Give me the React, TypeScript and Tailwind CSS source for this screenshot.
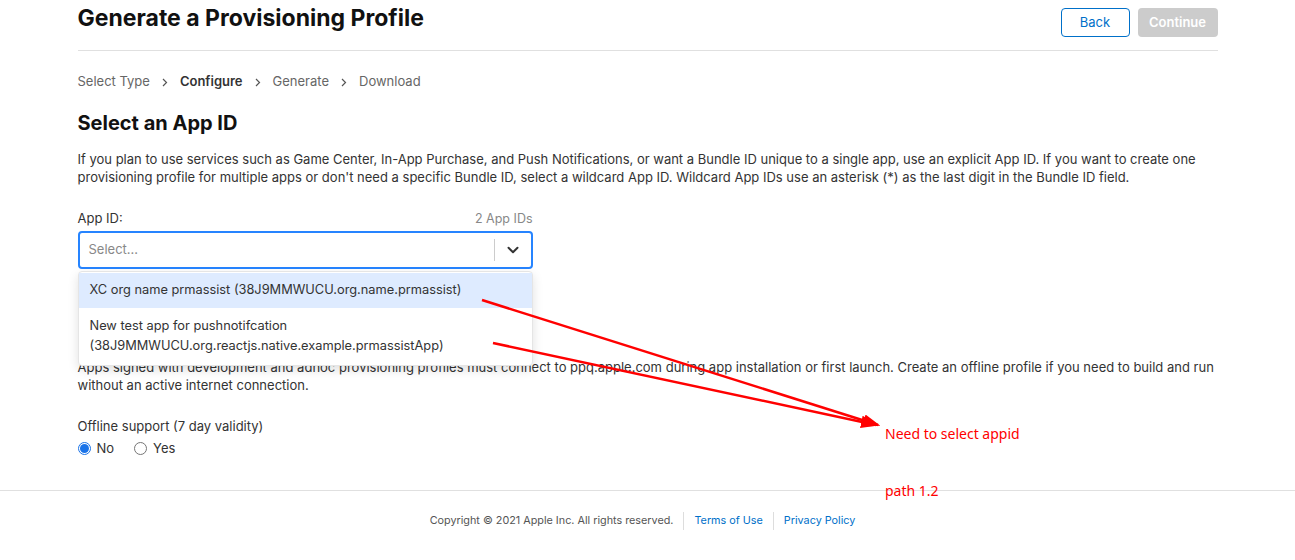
import { ChevronDown } from 'lucide-react'

const steps = ['Select Type', 'Configure', 'Generate', 'Download']

const appIds = [
  { name: 'XC org name prmassist', id: '38J9MMWUCU.org.name.prmassist', wrap: false },
  { name: 'New test app for pushnotifcation', id: '38J9MMWUCU.org.reactjs.native.example.prmassistApp', wrap: true },
]

function Crumb() {
  return (
    <svg width="6" height="9" viewBox="0 0 6 9" className="mx-[12px] mt-[3px]">
      <path d="M1 1l3.5 3.5L1 8" fill="none" stroke="#555" strokeWidth="1.2" />
    </svg>
  )
}

function Radio({ checked, label }: { checked: boolean; label: string }) {
  return (
    <label className="flex items-center gap-[6px] mr-[20px]">
      <span
        className={
          checked
            ? 'w-[13px] h-[13px] rounded-full border border-[#1a73e8] flex items-center justify-center'
            : 'w-[13px] h-[13px] rounded-full border border-[#767676]'
        }
      >
        {checked && <span className="w-[9px] h-[9px] rounded-full bg-[#1a73e8]" />}
      </span>
      <span className="text-[13px] leading-[18px] text-[#333]">{label}</span>
    </label>
  )
}

export default function App() {
  return (
    <div className="relative min-h-[560px] bg-white text-[#333] font-['Inter','Roboto',sans-serif]">
      <div className="max-w-[1140px] mx-auto">
        <div className="flex items-start justify-between h-[51px] border-b border-[#e0e0e0]">
          <h1 className="mt-[3px] text-[23px] leading-[30px] font-bold text-[#111]">
            Generate a Provisioning Profile
          </h1>
          <div className="flex gap-[8px] mt-[8px]">
            <button className="h-[29px] w-[69px] rounded-[4px] border border-[#0070c9] text-[13px] text-[#0070c9]">
              Back
            </button>
            <button className="h-[29px] w-[80px] rounded-[4px] bg-[#cccccc] text-[13px] font-semibold text-white">
              Continue
            </button>
          </div>
        </div>

        <div className="flex items-center mt-[21px] text-[13px] leading-[18px]">
          {steps.map((s, i) => (
            <div key={s} className="flex items-center">
              {i > 0 && <Crumb />}
              <span className={i === 1 ? 'font-semibold text-[#333]' : 'text-[#666]'}>{s}</span>
            </div>
          ))}
        </div>

        <h2 className="mt-[20px] text-[20px] leading-[26px] font-bold text-[#111]">Select an App ID</h2>

        <p className="mt-[14px] text-[13px] leading-[18px] text-[#333]">
          If you plan to use services such as Game Center, In-App Purchase, and Push Notifications, or want a Bundle ID unique to a single app, use an explicit App ID. If you want to create one provisioning profile for multiple apps or don't need a specific Bundle ID, select a wildcard App ID. Wildcard App IDs use an asterisk (*) as the last digit in the Bundle ID field.
        </p>

        <div className="w-[455px] mt-[23px]">
          <div className="flex items-end justify-between">
            <span className="text-[13px] leading-[18px] text-[#333]">App ID:</span>
            <span className="text-[12.5px] leading-[16px] text-[#888]">2 App IDs</span>
          </div>
          <div className="relative mt-[4px]">
            <div className="flex items-center h-[38px] rounded-[4px] border-2 border-[#2684ff]">
              <span className="flex-1 pl-[9px] text-[13px] text-[#888]">Select...</span>
              <span className="w-px h-[22px] bg-[#ccc]" />
              <span className="w-[36px] flex justify-center text-[#333]">
                <ChevronDown size={18} strokeWidth={2.6} />
              </span>
            </div>
            <div className="absolute left-0 top-[40px] w-full bg-white rounded-[4px] border border-[#e5e5e5] shadow-[0_4px_11px_rgba(0,0,0,0.12)] py-[1px] z-10">
              {appIds.map((a, i) => (
                <div
                  key={a.id}
                  className={
                    i === 0
                      ? 'px-[11px] pt-[7px] pb-[8px] text-[12.8px] leading-[20px] text-[#333] bg-[#deebff]'
                      : 'px-[11px] py-[8px] text-[12.8px] leading-[20px] text-[#333]'
                  }
                >
                  {a.wrap ? (
                    <>
                      {a.name}
                      <br />({a.id})
                    </>
                  ) : (
                    `${a.name} (${a.id})`
                  )}
                </div>
              ))}
            </div>
          </div>
        </div>

        <p className="mt-[89px] text-[13px] leading-[18px] text-[#333]">
          Apps signed with development and adhoc provisioning profiles must connect to ppq.apple.com during app installation or first launch. Create an offline profile if you need to build and run without an active internet connection.
        </p>

        <div className="mt-[23px] text-[13px] leading-[18px] text-[#333]">Offline support (7 day validity)</div>
        <div className="flex items-center mt-[4px]">
          <Radio checked label="No" />
          <Radio checked={false} label="Yes" />
        </div>
      </div>

      <footer className="mt-[33px] border-t border-[#e0e0e0] pt-[21px] pb-[20px]">
        <div className="flex items-center justify-center pr-[10px] text-[10.8px] leading-[16px]">
          <span className="text-[#555]">Copyright © 2021 Apple Inc. All rights reserved.</span>
          <span className="w-px h-[18px] bg-[#ddd] mx-[10px]" />
          <a className="text-[#0070c9]">Terms of Use</a>
          <span className="w-px h-[18px] bg-[#ddd] mx-[10px]" />
          <a className="text-[#0070c9]">Privacy Policy</a>
        </div>
      </footer>

      <svg className="absolute left-0 top-0 pointer-events-none z-20" width="1295" height="560">
        <defs>
          <marker id="ah" markerWidth="7" markerHeight="5" refX="6" refY="2.5" orient="auto" markerUnits="strokeWidth">
            <path d="M0 0L7 2.5L0 5z" fill="#ff0000" />
          </marker>
        </defs>
        <line x1="482" y1="300" x2="878" y2="425" stroke="#ff0000" strokeWidth="2.5" markerEnd="url(#ah)" />
        <line x1="493" y1="343" x2="876" y2="425" stroke="#ff0000" strokeWidth="2.5" markerEnd="url(#ah)" />
      </svg>
      <div className="absolute left-[885px] top-[424px] z-20 text-[14px] leading-[20px] text-[#ff0000] font-['Noto_Sans',sans-serif]">
        Need to select appid
      </div>
      <div className="absolute left-[885px] top-[481px] z-20 text-[14px] leading-[20px] text-[#ff0000] font-['Noto_Sans',sans-serif]">
        path 1.2
      </div>
    </div>
  )
}
